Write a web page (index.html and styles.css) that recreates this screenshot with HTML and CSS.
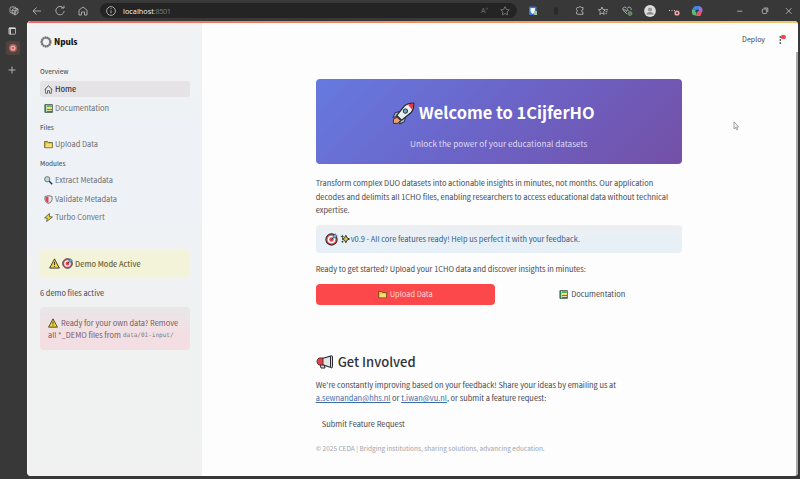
FILE: index.html
```html
<!DOCTYPE html>
<html lang="en">
<head>
<meta charset="utf-8">
<title>Npuls</title>
<link rel="stylesheet" href="styles.css">
</head>
<body>
<svg class="defs" width="0" height="0">
  <symbol id="warn" viewBox="0 0 12 12"><path d="M6 1 11.3 11H.7Z" fill="#efd52d" stroke="#343526" stroke-width="1" stroke-linejoin="round"/><path d="M6 4.3v3.4M6 8.8v1" stroke="#343526" stroke-width="1"/></symbol>
  <symbol id="target" viewBox="0 0 12 12"><circle cx="6" cy="6" r="5.2" fill="#ec5960" stroke="#33282d" stroke-width="1"/><circle cx="6" cy="6" r="3.5" fill="#fff"/><circle cx="6" cy="6" r="2.1" fill="#e9434c"/><path d="M6 6 9 3" stroke="#263744" stroke-width=".8"/><path d="M7.5 4.5V2.5l2-1.8.6 1.3 1.3.6L9.5 4.5Z" fill="#63b9d5" stroke="#294555" stroke-width=".5"/></symbol>
  <symbol id="folder" viewBox="0 0 12 12"><path d="M.8 10.3V2h4l1 1.3h5.4v7Z" fill="#e3bf35" stroke="#55491b"/><path d="M2 9.8 3 5h7.5v4.8Z" fill="#f7e06a"/></symbol>
  <symbol id="books" viewBox="0 0 12 12"><path d="M1.3.8h9.9v10.4H1.3Z" fill="#e8f0ce" stroke="#283a2e"/><path d="M1 .8v10.4h2V.8Z" fill="#35835b"/><path d="M4 1.5h6.5v2.5H4Z" fill="#58ae65"/><path d="M4 4.7h6.5v2.4H4Z" fill="#f3df65"/><path d="M4 7.5h6.7M4 10h6.7" stroke="#324b3a"/></symbol>
</svg>
<header class="browser">
  <svg class="ic workspaces" viewBox="0 0 12 12"><rect x="2" y="2" width="6" height="6" rx="1.5"/><path d="m4 5 3-2 3 1v4L7 10 4 8Zm0 0 3 1 3-2M7 6v4"/></svg>
  <svg class="ic back" viewBox="0 0 12 12"><path d="M10 6H2M5.5 2.5 2 6l3.5 3.5"/></svg>
  <svg class="ic reload" viewBox="0 0 12 12"><path d="M9.3 3A4.2 4.2 0 1 0 10.2 6M7 3h3V.7"/></svg>
  <svg class="ic house" viewBox="0 0 12 12"><path d="M2 5.2 6 2l4 3.2V10H7.5V7h-3v3H2Z"/></svg>
  <div class="address">
    <svg class="ic" viewBox="0 0 12 12"><circle cx="6" cy="6" r="4.4"/><path d="M6 5.3v3M6 3.2v1"/></svg>
    <span class="url">localhost<i>:8501</i></span>
    <span class="read">A<sup>»</sup></span>
    <svg class="ic fav" viewBox="0 0 12 12"><path d="m6 1.6 1.3 2.8 3 .4-2.2 2.1.6 3L6 8.5 3.3 9.9l.6-3-2.2-2.1 3-.4Z"/></svg>
  </div>
  <div class="tools">
    <svg viewBox="0 0 12 12"><rect x="2" y="1.5" width="7.5" height="8.5" rx="1" fill="#3974d8"/><path d="M3.5 3H8v3Q7.5 8 5.8 9 3.5 8 3.5 6Z" fill="#eef5ff"/><path d="M7 6h3v4H7Z" fill="#a6bfaa"/></svg>
    <svg viewBox="0 0 12 12"><rect x="4" y="2.5" width="4" height="7" rx="1" fill="#292929"/></svg>
    <svg class="ic" viewBox="0 0 12 12"><path d="M3.5 2.5h1.2a1.4 1.4 0 0 1 2.6 0H9v2a1.4 1.4 0 0 0 0 2.8v2H3.8a1.3 1.3 0 0 1-1.3-1.3V7a1.2 1.2 0 0 0 0-2.3V3.5a1 1 0 0 1 1-1Z"/></svg>
    <svg class="ic" viewBox="0 0 12 12"><path d="m5 2 1 2.5 2.2.2-1.6 2 .6 2.7L5 8.1 2.8 9.4l.5-2.7-1.8-2 2.5-.2ZM8.5 4.7H11M8.5 6.7h2M8.5 8.7H10"/></svg>
    <svg class="ic" viewBox="0 0 12 12"><path d="M6 9 2.2 5.3A2 2 0 0 1 5 2.5l1 1 1-1a2 2 0 0 1 3 2.5M2 5h2.5l1 1.5 1-2 1 1.5"/><circle cx="9" cy="8.5" r="2" fill="#548355" stroke="#99ae99" stroke-width=".5"/></svg>
    <svg viewBox="0 0 12 12"><circle cx="6" cy="6" r="5.9" fill="#ddd"/><circle cx="6" cy="4.5" r="2.1" fill="#999"/><path d="M2.5 9.5V8.8Q3 7 6 7t3.5 1.8v.7Z" fill="#888"/></svg>
    <svg viewBox="0 0 12 12"><path d="M1 5.5h1M3.5 5.5h1M6 5.5h1" stroke="#ccc"/><circle cx="9" cy="8" r="2.6" fill="#eda9ae"/><path d="M8 7h2v2H8Z" fill="#9d424d"/></svg>
    <svg viewBox="0 0 12 12"><path d="M4 1h4l1.3 4H3L1 8Q0 4 4 1" fill="#3c84e8"/><path d="M1 5h3.5L6 10.5H4Q0 10 1 5" fill="#5bba70"/><path d="M8 1q4 1 3.5 5L8 7Z" fill="#a668de"/><path d="M6.5 6h5L9.3 11H5.2Z" fill="#ec536e"/><path d="M5 4.7h2.4L6.5 7H4.2Z" fill="#263e76"/></svg>
  </div>
  <div class="window-buttons">
    <svg class="ic" viewBox="0 0 12 12"><path d="M3.3 6.2h5"/></svg>
    <svg class="ic" viewBox="0 0 12 12"><rect x="3.3" y="4" width="4.4" height="4.5" rx="1"/><path d="M5 3h3.8v4"/></svg>
    <svg class="ic" viewBox="0 0 12 12"><path d="m3 3.2 5.5 5.6m0-5.6L3 8.8"/></svg>
  </div>
</header>
<div class="body">
  <aside class="tabs">
    <svg viewBox="0 0 10 10"><rect x="1.9" y="1.8" width="6.6" height="6.4" rx=".7" fill="none" stroke="#ccc" stroke-width=".8"/><path d="M2 2.3h6.4M3.2 2v6.2" stroke="#ddd" stroke-width="1.3"/></svg>
    <span class="active-tab"><svg viewBox="0 0 10 10"><circle cx="5" cy="5" r="4" fill="#a8605a"/><circle cx="5" cy="5" r="2.6" fill="#e5b0a8"/><circle cx="5" cy="5" r="1.3" fill="#e4545c"/></svg></span>
    <svg class="plus" viewBox="0 0 10 10"><path d="M5 1.5v7M1.5 5h7" stroke="#bbb" stroke-width=".9"/></svg>
  </aside>
  <div class="page">
    <aside class="sidebar">
      <div class="logo"><svg viewBox="0 0 12 12"><circle cx="6" cy="6" r="4.4" fill="none" stroke="#888" stroke-width="2.5" stroke-dasharray="1.6 .5"/><circle cx="6" cy="6" r="4.2" fill="none" stroke="#666" stroke-width="1.1"/></svg><b>Npuls</b></div>
      <nav>
        <h4>Overview</h4>
        <a class="current"><svg viewBox="0 0 12 12"><path d="M2.2 5.5V11h2.5V7.5h2.6V11h2.5V5.5" fill="#f6f7ee" stroke="#353b39"/><path d="m.8 6.2 5.2-5 5.2 5" fill="none" stroke="#353b39" stroke-width="1.1"/></svg><span>Home</span></a>
        <a class="doc"><svg><use href="#books"/></svg><span>Documentation</span></a>
        <h4 class="files">Files</h4>
        <a class="upload"><svg><use href="#folder"/></svg><span>Upload Data</span></a>
        <h4 class="modules">Modules</h4>
        <a class="extract"><svg viewBox="0 0 12 12"><circle cx="4.3" cy="4.3" r="3.5" fill="#bdd7df" stroke="#4c5960"/><path d="m7 7 4 4" stroke="#263b47" stroke-width="2"/></svg><span>Extract Metadata</span></a>
        <a class="validate"><svg viewBox="0 0 12 12"><path d="M6 .8 10.8 2.1V6Q10.5 9.7 6 11.5 1.5 9.7 1.2 6V2.1Z" fill="#eee" stroke="#53545b"/><path d="M6 1.8V10.6Q2.3 9 2 5.5V2.9Z" fill="#dc4250"/></svg><span>Validate Metadata</span></a>
        <a class="turbo"><svg viewBox="0 0 12 12"><path d="M7.3.8.8 6.4l3.6.6L3.5 11.3 11.3 5.4 7.3 4.8Z" fill="#e7d743" stroke="#454726"/></svg><span>Turbo Convert</span></a>
      </nav>
      <div class="demo"><svg><use href="#warn"/></svg><svg><use href="#target"/></svg><span>Demo Mode Active</span></div>
      <p class="count">6 demo files active</p>
      <div class="own"><div><svg><use href="#warn"/></svg><span>Ready for your own data? Remove</span></div><div><span class="own2">all *_DEMO files from</span> <code>data/01-input/</code></div></div>
    </aside>
    <main>
      <div class="deploy"><span>Deploy</span><svg viewBox="0 0 10 10"><path d="M3.3 1.3v1.5M3.3 4.3v1.5M3.3 7.3v1.5" stroke="#333" stroke-width="1.5"/><rect x="4" y="0" width="4.8" height="4" rx="1.5" fill="#f4454b"/></svg></div>
      <svg class="cursor" viewBox="0 0 6 10"><path d="M1 .8v7l1.5-1.3 1 2.3 1.1-.5-1-2.3h2Z" fill="#fff" stroke="#777" stroke-width=".7"/></svg>
      <article>
        <section class="hero">
          <h1><svg viewBox="0 0 24 24"><path d="M8 10 3.5 11 1 16l5-1Zm6 6-1 4.5L8 23l1-5Z" fill="#9ebcc8" stroke="#252a35"/><path d="m5 14 8-10Q17 1 22.7 1.3 23 7 20 11l-10 8Z" fill="#e7eff0" stroke="#252a35" stroke-width="1.3"/><path d="M16.5 2.7Q20 1.5 22.1 1.9 22.5 4.7 21 8Z" fill="#e83b47"/><circle cx="14" cy="9.5" r="2.3" fill="#6ca6be" stroke="#252a35"/><path d="M5 16 1.5 18 1.5 22.5l5-.5 2.5-3Z" fill="#f4a16a" stroke="#402a2a"/></svg><span>Welcome to 1CijferHO</span></h1>
          <p><span>Unlock the power of your educational datasets</span></p>
        </section>
        <p class="intro"><span class="l1">Transform complex DUO datasets into actionable insights in minutes, not months. Our application</span><br><span class="l2">decodes and delimits all 1CHO files, enabling researchers to access educational data without technical</span><br>expertise.</p>
        <div class="info"><svg><use href="#target"/></svg><svg class="spark" viewBox="0 0 12 12"><path d="m7 1.5 1.4 3L11.5 6 8.4 7.5 7 10.5 5.6 7.5 2.5 6l3.1-1.5Z" fill="#d9c84d" stroke="#343a27" stroke-width="1.2"/><path d="m2.8.5.7 1.8 1.7.7-1.7.7-.7 1.8-.7-1.8L.4 3l1.7-.7ZM3 7.5l.5 1.3 1.3.5-1.3.5L3 11l-.5-1.2-1.3-.5 1.3-.5Z" fill="#343a27"/></svg><span>v0.9 - All core features ready! Help us perfect it with your feedback.</span></div>
        <p class="ready"><span>Ready to get started? Upload your 1CHO data and discover insights in minutes:</span></p>
        <div class="buttons"><a class="primary"><svg><use href="#folder"/></svg><span>Upload Data</span></a><a><svg><use href="#books"/></svg><span>Documentation</span></a></div>
        <h2><svg viewBox="0 0 18 14"><path d="M4 9h4l1 4H5Z" fill="#ddd" stroke="#25292b"/><path d="M6 3.5 15 1v11.5L6 9.5Z" fill="#e4e6e6" stroke="#25292b" stroke-width="1.2"/><path d="M7 3H3Q1 4 1 6.5T3 10h4Z" fill="#e6414a" stroke="#533034"/><rect x="14.5" y=".8" width="2" height="12" rx="1" fill="#ddd" stroke="#25292b"/></svg><span>Get Involved</span></h2>
        <p class="mail"><span class="m1">We're constantly improving based on your feedback! Share your ideas by emailing us at</span><br><span class="m2"><a>a.sewnandan@hhs.nl</a> or <a>t.iwan@vu.nl</a>, or submit a feature request:</span></p>
        <div class="submit"><span>Submit Feature Request</span></div>
        <footer><span>© 2025 CEDA | Bridging institutions, sharing solutions, advancing education.</span></footer>
      </article>
      <i class="scroll"></i>
    </main>
  </div>
</div>
</body>
</html>
```
FILE: styles.css
```css
* { box-sizing: border-box; }
body { margin: 0; width: 800px; height: 479px; overflow: hidden; background: #383838; color: #43454c; font: 7.45px/13.5px "Noto Sans CJK SC", "Open Sans", sans-serif; white-space: nowrap; }
h1, h2, h4, p { margin: 0; font-weight: 400; }
svg { display: block; flex: none; }
.defs { position: absolute; }
.browser { height: 21px; display: flex; align-items: center; background: #383838; }
.ic { width: 12px; height: 12px; fill: none; stroke: #b5b5b5; stroke-width: .9; }
.workspaces { margin-left: 8px; }
.back { margin-left: 11px; }
.reload { margin-left: 11px; }
.house { margin-left: 11px; }
.address { margin-left: 11px; width: 417px; height: 15px; border-radius: 8px; background: #242424; display: flex; align-items: center; padding-left: 5px; }
.url { margin-left: 6px; color: #eee; font: 7.3px/14px "Noto Sans", sans-serif; }
.url i { color: #777; font-style: normal; letter-spacing: -.4px; }
.read { margin-left: auto; color: #777; font: 7px/12px "Open Sans", sans-serif; }
.read sup { font-size: 5px; line-height: 0; }
.fav { margin: 0 6px 0 11px; stroke: #777; }
.tools { margin-left: 10px; width: 176px; display: flex; justify-content: space-between; }
.tools svg { width: 12px; height: 12px; }
.window-buttons { margin-left: 31px; width: 61px; display: flex; justify-content: space-between; }
.body { display: flex; height: 458px; }
.tabs { width: 27px; padding: 5px 0 0 7px; }
.tabs svg { width: 10px; height: 10px; }
.active-tab { display: flex; width: 14px; height: 14px; margin: 5px 0 9px -1px; padding: 2px; border-radius: 3px; background: #51433f; }
.tabs .plus { margin-top: 10px; }
.page { position: relative; width: 771px; height: 455px; display: flex; overflow: hidden; border-radius: 4px; border-left: 1px solid #fafafa; background: #fdfdfe; }
.page::before { content: ""; position: absolute; z-index: 1; left: 0; right: 0; top: 0; height: 1.5px; background: linear-gradient(90deg, #ed6560, #f2a05e 70%, #f3c572); }
.sidebar { width: 174px; padding: 13px 13px 0 12px; background: linear-gradient(#f1f2f3 0, #f1f2f3 50px, #eef2f6 100px, #eef2f6 180px, #f0f1f2 270px, #f1f1f1); }
.logo { height: 15px; display: flex; align-items: center; color: #17191b; }
.logo svg { width: 12px; height: 12px; margin-right: 2px; }
.logo b { font: 900 8.2px/13px "Noto Sans CJK SC", sans-serif; letter-spacing: -.1px; }
h4 { height: 13px; margin-top: 16px; font: 500 6.3px/14px "Noto Sans CJK SC", sans-serif; color: #575a62; }
nav a { display: flex; align-items: center; height: 16px; padding-left: 4px; color: #696c73; border-radius: 3px; }
nav svg { width: 9px; height: 9px; margin-right: 2px; }
nav .current { width: 150px; margin-top: 3px; background: #e5e3e6; color: #35373b; font-weight: 500; }
.doc { margin-top: 3px; }
.files { margin-top: 5px; }
.upload { margin-top: 2px; }
.modules { margin-top: 5px; }
.extract { margin-top: 2px; }
.validate { margin-top: 3px; }
.turbo { margin-top: 2px; }
.demo { width: 150px; height: 27px; margin-top: 25px; padding-left: 9px; border-radius: 4px; background: #f2f3d9; display: flex; align-items: center; color: #706638; font-weight: 500; }
.demo svg { width: 11px; height: 11px; margin-right: 2px; }
.count { margin-top: 9px; }
.own { width: 150px; height: 43px; margin-top: 7px; padding: 10px 8px 0; border-radius: 4px; background: linear-gradient(#e8e7e8, #f3dfe3 60%); color: #785860; line-height: 12.5px; }
.own div { display: flex; align-items: center; height: 12.5px; }
.own svg { width: 10px; height: 10px; margin-right: 3px; }
code { margin-left: 2px; font: 6.1px/10px "DejaVu Sans Mono", monospace; letter-spacing: -.05px; color: #827b79; }
main { position: relative; flex: 1; padding-left: 114px; }
.deploy { position: absolute; right: 11px; top: 12px; display: flex; align-items: center; font-size: 7px; }
.deploy svg { width: 10px; height: 10px; margin-left: 12px; }
.cursor { position: absolute; left: 531px; top: 100px; width: 6px; height: 10px; }
article { width: 366px; margin-left: -.3px; padding-top: 58px; }
.hero { height: 85px; border-radius: 4px; background: linear-gradient(135deg, #667ae0 0%, #6b65c9 45%, #7450a7 100%); color: #fff; }
h1 { height: 68px; padding-right: 11px; display: flex; align-items: center; justify-content: center; font-size: 16.4px; font-weight: 700; }
.hero svg { width: 23px; height: 23px; margin-right: 4px; }
.hero p { height: 14px; margin-top: -10px; text-align: center; font-size: 8.2px; color: #dedaf4; }
.intro { margin-top: 12px; }
.info { height: 28px; margin-top: 8.5px; padding-left: 9px; border-radius: 4px; background: linear-gradient(#eeeff0, #e8f0f7 45%); color: #35587e; display: flex; align-items: center; }
.info svg { width: 13px; height: 13px; }
.info .spark { width: 10px; height: 10px; margin: 0 1px 0 2px; }
.ready { margin-top: 9px; }
.buttons { display: grid; grid-template-columns: 179px 179px; gap: 8px; margin-top: 8px; }
.buttons a { height: 21px; display: flex; align-items: center; justify-content: center; border-radius: 4px; }
.buttons svg { width: 9px; height: 9px; margin-right: 3px; }
.buttons .primary { background: #fd484b; color: #ffd9d5; }
h2 { display: flex; align-items: center; height: 20px; margin-top: 47px; font-size: 13px; font-weight: 500; color: #303238; }
h2 svg { width: 18px; height: 14px; margin-right: 4px; }
.mail { margin-top: 6px; }
.mail a { color: #386da9; text-decoration: underline; text-underline-offset: 1px; }
.submit { height: 20px; margin-top: 9px; padding: 3px 6px; }
footer { margin-top: 8px; font-size: 6.5px; color: #a2a4a8; }
.scroll { position: absolute; right: 0; top: 31px; width: 2px; bottom: 0; background: #aaa; }
```
